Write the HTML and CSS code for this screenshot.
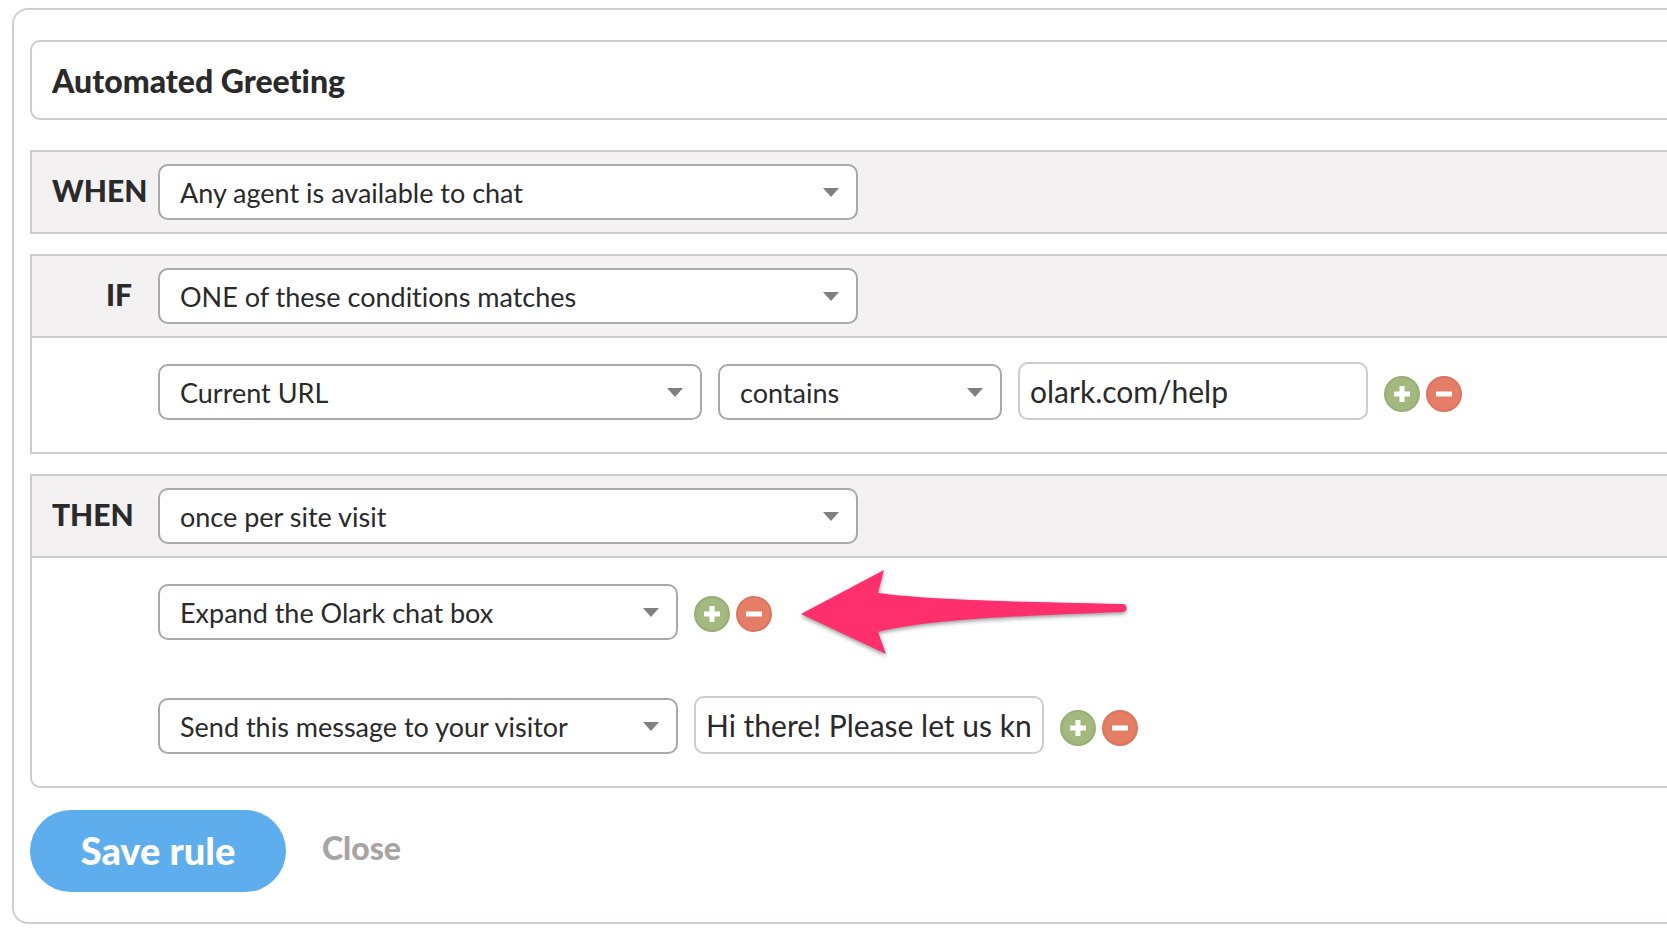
FILE: index.html
```html
<!DOCTYPE html>
<html lang="en">
<head>
    <meta charset="UTF-8">
    <meta name="viewport" content="width=device-width, initial-scale=1.0">
    <title>Automated Greeting</title>
    <link rel="stylesheet" href="styles.css">
</head>
<body>
    <!-- shared icons -->
    <svg class="sprite" aria-hidden="true">
        <symbol id="icon-plus" viewBox="0 0 36 36">
            <circle cx="18" cy="18" r="17" fill="#a3b97f" stroke="#99ae77" stroke-width="2"/>
            <path d="M10 18h16M18 10v16" stroke="#fff" stroke-width="5"/>
        </symbol>
        <symbol id="icon-minus" viewBox="0 0 36 36">
            <circle cx="18" cy="18" r="17" fill="#e67d67" stroke="#d87662" stroke-width="2"/>
            <path d="M10 18h16" stroke="#fff" stroke-width="5"/>
        </symbol>
    </svg>

    <form class="rule" id="ruleForm">
        <input type="text" class="rule-name" name="name" aria-label="Rule name" value="Automated Greeting">

        <section class="block">
            <div class="block-header">
                <label for="when">WHEN</label>
                <div class="select select-wide">
                    <select id="when" name="when">
                        <option>Any agent is available to chat</option>
                    </select>
                </div>
            </div>
        </section>

        <section class="block">
            <div class="block-header">
                <label for="match">IF</label>
                <div class="select select-wide">
                    <select id="match" name="match">
                        <option>ONE of these conditions matches</option>
                    </select>
                </div>
            </div>
            <div class="block-body">
                <div class="row">
                    <div class="select select-field">
                        <select name="field" aria-label="Condition">
                            <option>Current URL</option>
                        </select>
                    </div>
                    <div class="select select-operator">
                        <select name="operator" aria-label="Operator">
                            <option>contains</option>
                        </select>
                    </div>
                    <input type="text" class="value" name="value" aria-label="Value" value="olark.com/help">
                    <div class="row-buttons">
                        <button type="button" aria-label="Add condition"><svg><use href="#icon-plus"/></svg></button>
                        <button type="button" aria-label="Remove condition"><svg><use href="#icon-minus"/></svg></button>
                    </div>
                </div>
            </div>
        </section>

        <section class="block block-last">
            <div class="block-header">
                <label for="then">THEN</label>
                <div class="select select-wide">
                    <select id="then" name="then">
                        <option>once per site visit</option>
                    </select>
                </div>
            </div>
            <div class="block-body">
                <div class="row">
                    <div class="select select-action">
                        <select name="action1" aria-label="Action">
                            <option>Expand the Olark chat box</option>
                        </select>
                    </div>
                    <div class="row-buttons">
                        <button type="button" aria-label="Add action"><svg><use href="#icon-plus"/></svg></button>
                        <button type="button" aria-label="Remove action"><svg><use href="#icon-minus"/></svg></button>
                        <svg class="pointer" viewBox="0 0 340 96" aria-hidden="true">
                            <path d="M5 48L88 4L82 27C135 34 225 36 326 38A4 4 0 0 1 327 46C225 50 135 53 82 66L90 88Z" fill="#ff2f6d"/>
                        </svg>
                    </div>
                </div>
                <div class="row">
                    <div class="select select-action">
                        <select name="action2" aria-label="Action">
                            <option>Send this message to your visitor</option>
                        </select>
                    </div>
                    <input type="text" class="value" name="message" aria-label="Message" value="Hi there! Please let us know if you need help">
                    <div class="row-buttons">
                        <button type="button" aria-label="Add action"><svg><use href="#icon-plus"/></svg></button>
                        <button type="button" aria-label="Remove action"><svg><use href="#icon-minus"/></svg></button>
                    </div>
                </div>
            </div>
        </section>

        <div class="actions">
            <button type="submit" class="save">Save rule</button>
            <a href="#" class="close">Close</a>
        </div>
    </form>
</body>
</html>
```
FILE: styles.css
```css
* {
    box-sizing: border-box;
}
body {
    font-family: Lato, "Open Sans", sans-serif;
    font-variant-ligatures: none;
    background-color: #ffffff;
    color: #2a2a2a;
    margin: 0;
    padding: 8px 0 14px 12px;
}
input, select, button {
    font-family: inherit;
    font-variant-ligatures: inherit;
    color: inherit;
    margin: 0;
}
.sprite {
    display: none;
}
/* the panel runs off the right edge */
.rule {
    padding: 30px 0 30px 16px;
    border: 2px solid #d6cccc;
    border-right: none;
    border-radius: 16px 0 0 16px;
}
.rule-name {
    display: block;
    width: 100%;
    height: 80px;
    margin-bottom: 30px;
    padding: 0 20px;
    border: 2px solid #cccccc;
    border-right: none;
    border-radius: 10px 0 0 10px;
    font-size: 32px;
    font-weight: 900;
}
.block {
    margin-bottom: 20px;
    border: 2px solid #cccccc;
    border-top: none;
    border-right: none;
}
.block-last {
    border-radius: 0 0 0 10px;
}
.block-header {
    display: flex;
    align-items: center;
    gap: 26px;
    height: 84px;
    padding-left: 20px;
    border-top: 2px solid #cccccc;
    border-bottom: 2px solid #cccccc;
    background-color: #f3f1f2;
}
.block-header:last-child {
    height: 82px;
    border-bottom: none;
}
.block-header label {
    width: 80px;
    padding-bottom: 4px;
    font-size: 30px;
    font-weight: 900;
    text-align: right;
    white-space: nowrap;
}
.block-body {
    display: flex;
    flex-direction: column;
    gap: 56px;
    padding: 24px 0 32px 126px;
}
.row {
    display: flex;
    align-items: flex-end;
    gap: 16px;
    min-height: 58px;
}
.select {
    position: relative;
}
.select::after {
    content: "";
    position: absolute;
    top: 24px;
    right: 19px;
    border: 8px solid transparent;
    border-top: 9px solid #808080;
    border-bottom: none;
    pointer-events: none;
}
.select select {
    display: block;
    width: 100%;
    height: 56px;
    padding: 0 44px 0 20px;
    border: 2px solid #a8a8a8;
    border-radius: 10px;
    background-color: #ffffff;
    font-size: 27px;
    appearance: none;
}
.select-wide {
    width: 700px;
}
.select-field {
    width: 544px;
}
.select-operator {
    width: 284px;
}
.select-action {
    width: 520px;
}
.value {
    width: 350px;
    height: 58px;
    padding: 0 10px;
    border: 2px solid #cccccc;
    border-radius: 10px;
    font-size: 30px;
}
.row-buttons {
    position: relative;
    display: flex;
    gap: 6px;
    margin-bottom: 8px;
}
.row-buttons button {
    width: 36px;
    height: 36px;
    padding: 0;
    border: none;
    background: none;
    cursor: pointer;
}
.row-buttons button svg {
    display: block;
    width: 36px;
    height: 36px;
}
.pointer {
    position: absolute;
    top: -30px;
    left: 100%;
    width: 340px;
    height: 96px;
    margin-left: 24px;
    filter: drop-shadow(0 2px 2px rgba(0, 0, 0, 0.4));
    pointer-events: none;
}
.actions {
    display: flex;
    align-items: center;
    gap: 36px;
    padding-top: 2px;
}
.save {
    width: 256px;
    height: 82px;
    padding: 0 0 2px;
    border: none;
    border-radius: 41px;
    background-color: #5eadec;
    color: #ffffff;
    font-size: 38px;
    font-weight: 900;
    cursor: pointer;
}
.save:hover {
    background-color: #4a9bdc;
}
.close {
    padding-bottom: 8px;
    color: #aaa3a4;
    font-size: 32px;
    font-weight: 900;
    text-decoration: none;
}
```
